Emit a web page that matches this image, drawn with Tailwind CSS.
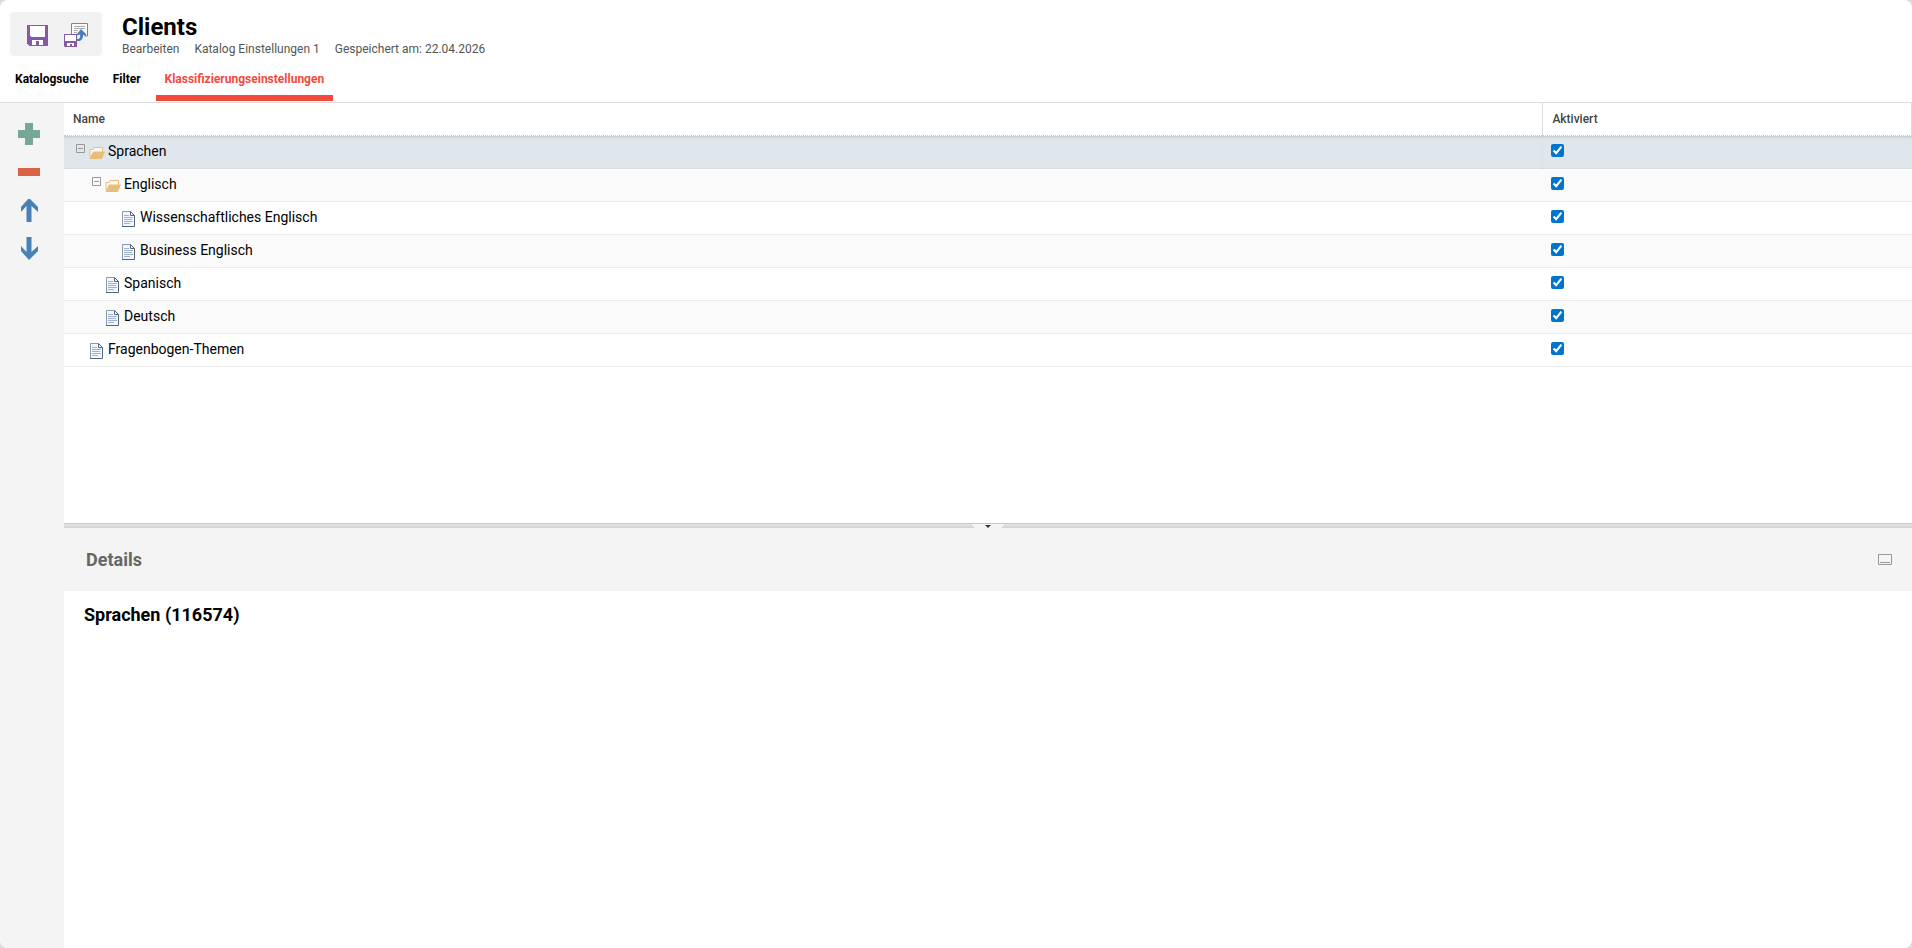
<!DOCTYPE html>
<html lang="de">
<head>
  <meta charset="UTF-8">
  <title>Clients - Klassifizierungseinstellungen</title>
  <script src="https://cdn.jsdelivr.net/npm/@tailwindcss/browser@4"></script>
</head>
<body class="h-screen bg-[#dcdcdc] font-[Roboto,sans-serif] text-black">

  <!-- Icons shared by the tree rows -->
  <svg class="hidden">
    <symbol id="icon-folder" viewBox="0 0 16 16">
      <path d="M1 12.500V4.500h3l1-2h8.500v5" fill="#fffaf0" stroke="#e8bd7c" />
      <path d="M4 6.500h12l-3 7.500H0.500z" fill="#e8bd7c" />
    </symbol>
    <symbol id="icon-doc" viewBox="0 0 16 16">
      <path d="M1.500 .5h8l3 3v12h-11z" fill="#f1f6ff" />
      <path d="M1.500 15.500V.5h8" fill="none" stroke="#8c9cb0" />
      <path d="M9.500 .5l4 4v11h-12.500M9.500 .5v4h4" fill="none" stroke="#53657d" />
      <path d="M3 4.500h5M3 6.500h9M3 8.500h8M3 10.500h9M3 12.500h6" stroke="#a3b0cc" />
    </symbol>
    <symbol id="icon-minus" viewBox="0 0 9 9">
      <path d="M.5 .5h8v8h-8zM2 4.500h5" fill="none" stroke="#999" />
    </symbol>
  </svg>

  <div class="flex h-full flex-col overflow-hidden rounded-lg bg-white">

    <!-- Header -->
    <header class="border-b border-[#dcdcdc]">
      <div class="flex h-15 items-end gap-5 pl-[10px]">
        <div class="mb-1 flex h-11 w-23 items-center rounded bg-[#f2f2f2] pt-[2px] pl-4">
          <button type="button" aria-label="Speichern" class="flex h-6 w-6 items-end pb-px">
            <svg class="ml-px h-[21px] w-[21px]" viewBox="0 0 21 21" shape-rendering="crispEdges">
              <path d="M0 0h21v21H2l-2-2z" fill="#8559a5" />
              <path d="M3 1h15v10l-1 1H4l-1-1zM5 15h11v5h-4v-4H9v4H5z" fill="#fff" />
            </svg>
          </button>
          <button type="button" aria-label="Speichern und schließen" class="ml-[14px] h-6 w-6">
            <svg class="h-6 w-6" viewBox="0 0 24 24">
              <path d="M7.500 11V.5h16v12.500h-3" fill="#fafafa" stroke="#858585" />
              <path d="M10 3.500h11M10 5.500h11M10 7.500h4M10 9.500h3" stroke="#aaa" />
              <path d="M0 11h13v13H1l-1-1z" fill="#8559a5" />
              <path d="M1 12h11v6H1zM3 20h7v3H8v-2H6v2H3z" fill="#fff" />
              <path d="M17 6l5 5v2l-3-1c0 4-1.500 6.500-6 6v-2c3 0 3.500-2 3-4.500l-3 1V11z" fill="#4a80b8" />
            </svg>
          </button>
        </div>
        <div>
          <h1 class="text-2xl leading-7 font-bold">Clients</h1>
          <p class="flex gap-[15px] pb-[3px] text-xs leading-4 text-[#555]">
            <span>Bearbeiten</span>
            <span>Katalog Einstellungen 1</span>
            <span>Gespeichert am: 22.04.2026</span>
          </p>
        </div>
      </div>
      <nav class="flex gap-[6px] pl-[6px] text-xs leading-4 font-bold">
        <a href="#" class="border-b-6 border-transparent px-[9px] pt-[11px] pb-2">Katalogsuche</a>
        <a href="#" class="border-b-6 border-transparent px-[9px] pt-[11px] pb-2">Filter</a>
        <a href="#" class="mb-px border-b-6 border-[#f4493d] px-[9px] pt-[11px] pb-2 text-[#f4493d]">Klassifizierungseinstellungen</a>
      </nav>
    </header>

    <div class="flex min-h-0 flex-1">

      <!-- Tree actions -->
      <aside class="flex w-16 flex-col items-center gap-[14px] bg-[#f4f4f4] pt-5 pr-[6px]">
        <button type="button" aria-label="Hinzufügen" class="h-6 w-6">
          <svg class="h-6 w-6" viewBox="0 0 24 24" shape-rendering="crispEdges"><path d="M8 0h8v7h7v8h-7v7H8v-7H1V7h7z" fill="#77a796" /></svg>
        </button>
        <button type="button" aria-label="Entfernen" class="h-6 w-6">
          <svg class="h-6 w-6" viewBox="0 0 24 24" shape-rendering="crispEdges"><path d="M1 7h22v8H1z" fill="#da6245" /></svg>
        </button>
        <button type="button" aria-label="Nach oben" class="h-6 w-6">
          <svg class="h-6 w-6" viewBox="0 0 24 24"><path d="M12 -1L21 8v5l-6.500-6V23h-5V7L4 13V8z" fill="#4a80b8" /></svg>
        </button>
        <button type="button" aria-label="Nach unten" class="h-6 w-6">
          <svg class="h-6 w-6" viewBox="0 0 24 24"><path d="M12 23L21 14V9l-6.500 6V-1h-5V15L4 9v5z" fill="#4a80b8" /></svg>
        </button>
      </aside>

      <main class="flex min-w-0 flex-1 flex-col">

        <!-- Classification tree -->
        <section class="min-h-0 flex-1 overflow-auto">
          <table class="w-full table-fixed border-separate border-spacing-0 text-sm">
            <thead>
              <tr class="h-[33px] text-left text-xs text-[#444]">
                <th class="w-4/5 border-b border-dotted border-[#c4ccd0] pl-[9px] font-medium">Name</th>
                <th class="border-x border-b border-[#dcdcdc] border-b-[#c4ccd0] pl-[9px] font-medium [border-bottom-style:dotted]">Aktiviert</th>
              </tr>
            </thead>
            <tbody id="tree"></tbody>
          </table>
        </section>

        <!-- Splitter -->
        <div class="flex h-[5px] justify-center border-t border-[#c8c8c8] bg-linear-to-b from-[#e6e6e6] to-[#d2d2d2]">
          <button type="button" aria-label="Details einklappen" class="flex h-1 w-[34px] justify-center">
            <svg class="h-1 w-[34px]" viewBox="0 0 34 4"><path d="M0 0h34l-4 4H4z" fill="#f4f4f4" /><path d="M14 1h6l-3 3z" fill="#333" /></svg>
          </button>
        </div>

        <!-- Details -->
        <section class="flex min-h-0 flex-1 flex-col">
          <div class="flex h-[63px] items-center justify-between bg-[#f4f4f4] pr-5 pl-[22px]">
            <h2 class="text-lg leading-6 font-bold text-[#666]">Details</h2>
            <button type="button" aria-label="Minimieren">
              <svg class="h-[11px] w-[14px]" viewBox="0 0 14 11"><path d="M.5 .5h13v10H.5zM2 8.500h10" fill="none" stroke="#999" /></svg>
            </button>
          </div>
          <h3 class="px-5 py-3 text-lg leading-6 font-bold">Sprachen (116574)</h3>
        </section>
      </main>
    </div>
  </div>

  <script>
    const entries = [
      { name: "Sprachen", level: 0, folder: true, selected: true },
      { name: "Englisch", level: 1, folder: true },
      { name: "Wissenschaftliches Englisch", level: 2 },
      { name: "Business Englisch", level: 2 },
      { name: "Spanisch", level: 1 },
      { name: "Deutsch", level: 1 },
      { name: "Fragenbogen-Themen", level: 0 }
    ];
    const indent = ["pl-[9px]", "pl-[25px]", "pl-[41px]"];

    document.getElementById("tree").innerHTML = entries.map((entry, i) => {
      const bg = entry.selected ? "bg-[#dfe7ec]" : i % 2 ? "bg-[#fafafa]" : "bg-white";
      const border = entry.selected ? "border-b border-dotted border-[#d0dae0]" : "border-b border-[#ededed]";
      const shadow = i === 0 ? "shadow-[inset_0_3px_3px_-2px_#b8c4c8]" : "";
      const toggle = entry.folder
        ? `<button type="button" aria-label="Einklappen" class="flex h-4 w-4 pt-px pl-[3px]"><svg class="h-[9px] w-[9px]"><use href="#icon-minus" /></svg></button>`
        : `<span class="w-4"></span>`;
      return `
        <tr class="h-[33px] ${bg}">
          <td class="${border} ${shadow} p-0">
            <div class="flex h-8 pt-[7px] ${indent[entry.level]}">
              ${toggle}
              <svg class="mt-[2px] h-4 w-4"><use href="#${entry.folder ? "icon-folder" : "icon-doc"}" /></svg>
              <label for="entry-${i}" class="pl-[3px] leading-4">${entry.name}</label>
            </div>
          </td>
          <td class="${border} ${shadow} p-0">
            <div class="flex h-8 pt-2 pl-[9px]">
              <input type="checkbox" id="entry-${i}" checked class="h-[13px] w-[13px] accent-[#0075d0]">
            </div>
          </td>
        </tr>`;
    }).join("");
  </script>
</body>
</html>
